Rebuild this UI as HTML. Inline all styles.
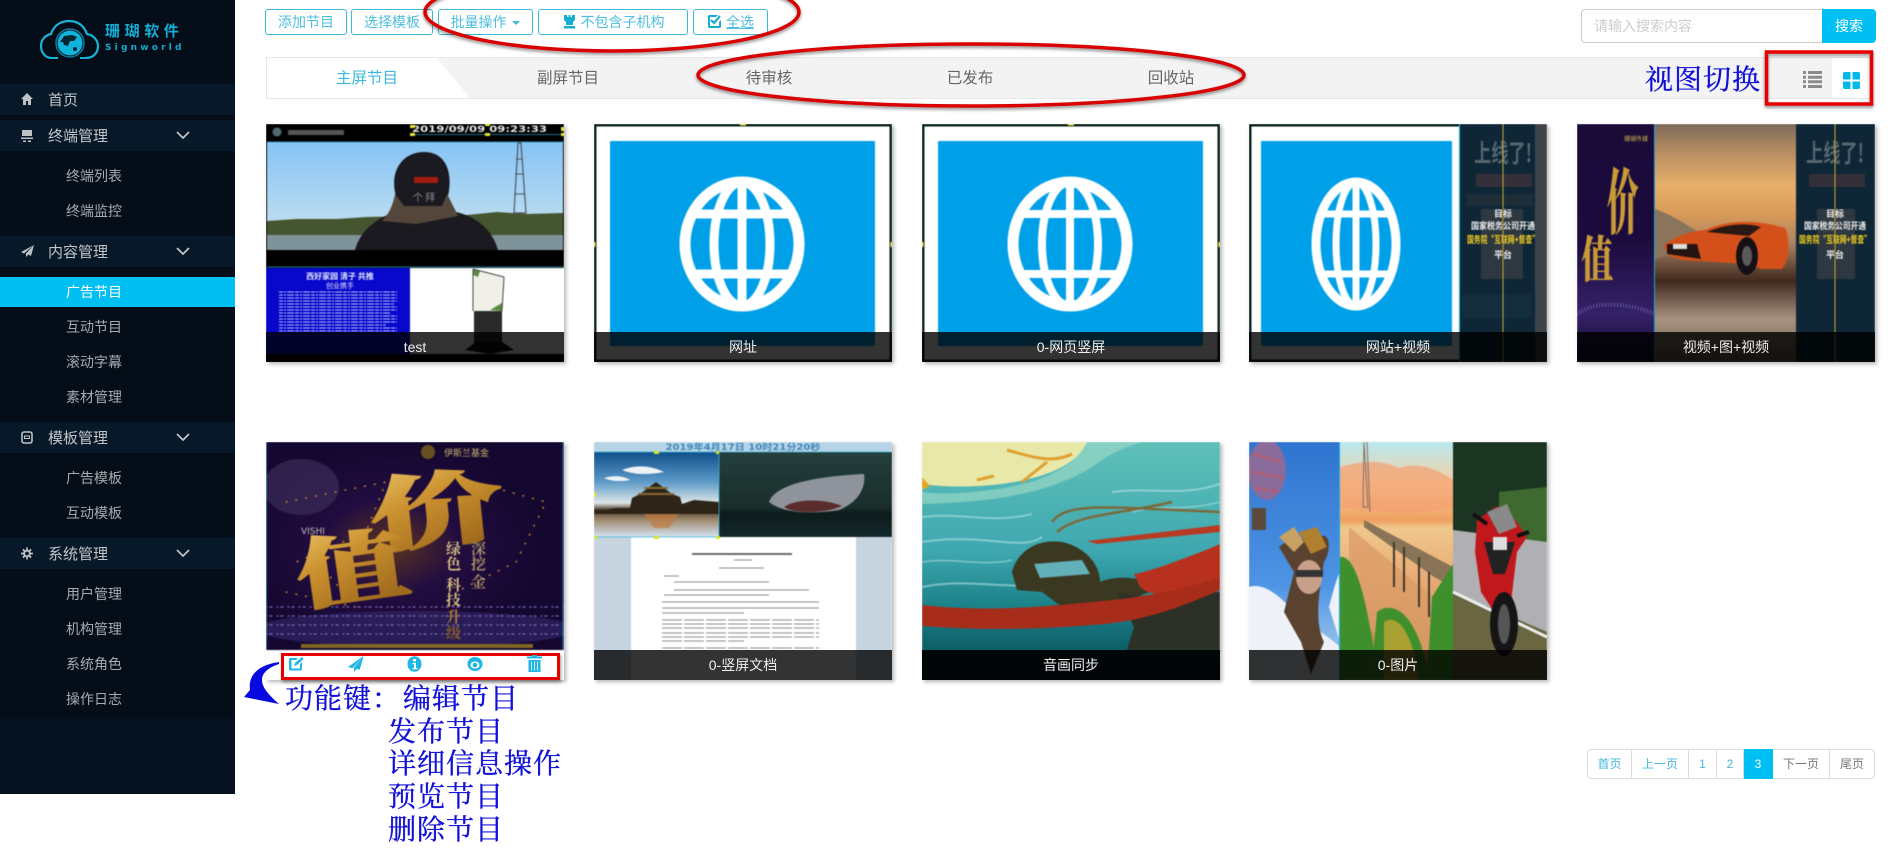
<!DOCTYPE html>
<html lang="zh"><head><meta charset="utf-8"><title>广告节目</title>
<style>
*{box-sizing:border-box;margin:0;padding:0}
html,body{width:1897px;height:844px;overflow:hidden;background:#fff;font-family:"Liberation Sans","Noto Sans CJK SC",sans-serif}
.a{position:absolute}
#side{left:0;top:0;width:235px;height:794px;background:#06121f}
.dark{left:0;width:235px;background:#040d18}
.row{left:0;width:235px;height:31px;background:#071828;color:#c2c5c8;font-size:15px;line-height:33px;padding-left:48px}
.row svg{position:absolute}
.sub{left:66px;font-size:14px;color:#a7abae;line-height:21px;height:20px}
.btn{top:9px;height:26px;border:1px solid #3db9d9;border-radius:3px;color:#4dbfe0;font-size:14px;line-height:24px;text-align:center;background:#fff}
.tab{top:69px;font-size:15.5px;line-height:20px;color:#666;text-align:center;width:120px}
.card{width:298px;height:238px;box-shadow:2px 2px 4px rgba(0,0,0,.3);overflow:hidden;background:#fff}
.card svg{display:block;position:absolute;left:0;top:0;filter:blur(.4px)}
.lab{position:absolute;left:0;bottom:0;width:298px;height:30px;background:rgba(0,0,0,.8);color:#eee;font-size:14px;line-height:30px;text-align:center}
.blue{color:#1010d8;font-family:"Noto Serif CJK SC","Liberation Serif",serif;font-size:28px;line-height:33px;white-space:nowrap;letter-spacing:1px;-webkit-text-stroke:.35px #1010d8}
.pg{top:749px;height:30px;border:1px solid #ddd;border-left:0;font-size:12px;line-height:28px;text-align:center;color:#45b8dc}
</style></head><body>

<div class="a" id="side"></div>
<div class="a dark" style="top:0;height:84px"></div>
<div class="a dark" style="top:115px;height:121px"></div>
<div class="a dark" style="top:267px;height:155px"></div>
<div class="a dark" style="top:453px;height:84px"></div>
<div class="a dark" style="top:568px;height:151px"></div>

<!-- logo -->
<svg class="a" style="left:38px;top:18px" width="62" height="44" viewBox="0 0 62 44">
<path d="M14 40C6 40 3 33 3 28 3 21 8 17 13 16 16 7 23 3 31 3c9 0 15 5 18 13 6 1 11 6 11 12 0 6-4 12-12 12" fill="none" stroke="#19b3d6" stroke-width="2.2"/>
<path d="M14 40h6M42 40h6" stroke="#19b3d6" stroke-width="2"/>
<circle cx="32" cy="25" r="14" fill="none" stroke="#127c9a" stroke-width="1.5"/>
<circle cx="32" cy="25" r="12.5" fill="#0fb4dc"/>
<path d="M22 24l4-6 8-1 5 2-3 4-4 0-2 5-4-1-1-3z" fill="#08222e"/><circle cx="37" cy="31" r="2" fill="#08222e"/>
</svg>
<div class="a" style="left:105px;top:22px;width:90px;font-size:15px;line-height:19px;font-weight:bold;color:#15aed4;letter-spacing:4.6px;white-space:nowrap">珊瑚软件</div>
<div class="a" style="left:105px;top:42px;font-size:9px;line-height:12px;color:#14a8cc;letter-spacing:3.2px;white-space:nowrap;font-family:'DejaVu Sans',sans-serif;font-weight:bold">Signworld</div>

<!-- sidebar rows -->
<div class="a row" style="top:84px">首页<svg style="left:20px;top:8px" width="14" height="14" viewBox="0 0 14 14"><path d="M7 1L1 7h2v6h3V9h2v4h3V7h2z" fill="#bfc2c5"/></svg></div>
<div class="a row" style="top:120px">终端管理<svg style="left:21px;top:9px" width="12" height="14" viewBox="0 0 12 14"><path d="M1 1h10v6H1zM0 8.5h12V10H0zM2 11.5h3V13H2zM7 11.5h3V13H7z" fill="#bfc2c5"/></svg><svg style="left:176px;top:11px" width="14" height="9" viewBox="0 0 14 9"><path d="M1 1l6 6 6-6" fill="none" stroke="#bfc2c5" stroke-width="1.8"/></svg></div>
<div class="a row" style="top:236px">内容管理<svg style="left:20px;top:8px" width="15" height="14" viewBox="0 0 15 14"><path d="M14 1L1 8l3 1.5zM14 1L6 9.5V13l2.5-2.5L11 12z" fill="#bfc2c5"/></svg><svg style="left:176px;top:11px" width="14" height="9" viewBox="0 0 14 9"><path d="M1 1l6 6 6-6" fill="none" stroke="#bfc2c5" stroke-width="1.8"/></svg></div>
<div class="a row" style="top:422px">模板管理<svg style="left:21px;top:9px" width="12" height="13" viewBox="0 0 12 13"><rect x="1" y="1" width="10" height="11" rx="2" fill="none" stroke="#bfc2c5" stroke-width="1.6"/><path d="M3.5 5h5v2.500h-5z" fill="none" stroke="#bfc2c5"/></svg><svg style="left:176px;top:11px" width="14" height="9" viewBox="0 0 14 9"><path d="M1 1l6 6 6-6" fill="none" stroke="#bfc2c5" stroke-width="1.8"/></svg></div>
<div class="a row" style="top:538px;line-height:34px">系统管理<svg style="left:21px;top:9px" width="12" height="13" viewBox="0 0 14 14"><circle cx="7" cy="7" r="3.300" fill="none" stroke="#bfc2c5" stroke-width="2.200"/><path d="M6 0h2v3H6zM6 11h2v3H6zM0 6h3v2H0zM11 6h3v2h-3zM1.500 3l1.500-1.500L5 3.500 3.500 5zM12.500 11L11 12.500 9 10.500 10.500 9zM1.500 11L3 12.500 5 10.500 3.500 9zM12.500 3L11 1.500 9 3.500 10.500 5z" fill="#bfc2c5"/></svg><svg style="left:176px;top:11px" width="14" height="9" viewBox="0 0 14 9"><path d="M1 1l6 6 6-6" fill="none" stroke="#bfc2c5" stroke-width="1.8"/></svg></div>

<div class="a" style="left:0;top:277px;width:235px;height:30px;background:#00c0f3"></div>
<div class="a sub" style="top:166px">终端列表</div>
<div class="a sub" style="top:201px">终端监控</div>
<div class="a sub" style="top:282px;color:#fff">广告节目</div>
<div class="a sub" style="top:317px">互动节目</div>
<div class="a sub" style="top:352px">滚动字幕</div>
<div class="a sub" style="top:387px">素材管理</div>
<div class="a sub" style="top:468px">广告模板</div>
<div class="a sub" style="top:503px">互动模板</div>
<div class="a sub" style="top:584px">用户管理</div>
<div class="a sub" style="top:619px">机构管理</div>
<div class="a sub" style="top:654px">系统角色</div>
<div class="a sub" style="top:689px">操作日志</div>

<!-- buttons -->
<div class="a btn" style="left:265px;width:82px">添加节目</div>
<div class="a btn" style="left:351px;width:82px">选择模板</div>
<div class="a btn" style="left:438px;width:95px">批量操作 <span style="display:inline-block;width:0;height:0;border:4px solid transparent;border-top:4px solid #3db9d9;border-bottom:0;vertical-align:2px;margin-left:2px"></span></div>
<div class="a btn" style="left:538px;width:150px"><svg width="15" height="15" viewBox="0 0 15 15" style="vertical-align:-2px;margin-right:4px"><path d="M2 1h3v2h1.500V1h2v2H10V1h3v5l-2 2v3H4V8L2 6zM2 12h11v2.500H2z" fill="#16aed4"/></svg>不包含子机构</div>
<div class="a btn" style="left:693px;width:75px"><svg width="15" height="15" viewBox="0 0 15 15" style="vertical-align:-2px;margin-right:4px"><path d="M3 1h8l-2 2H3v9h9V8l2-2v6.500A1.500 1.500 0 0 1 12.500 14h-10A1.500 1.500 0 0 1 1 12.500v-10A1.500 1.500 0 0 1 3 1z" fill="#16aed4"/><path d="M4 6l3 3 6-7" fill="none" stroke="#16aed4" stroke-width="2.200"/></svg><span style="text-decoration:underline">全选</span></div>

<!-- search -->
<div class="a" style="left:1581px;top:9px;width:242px;height:34px;border:1px solid #ccc;border-right:0;border-radius:4px 0 0 4px;color:#ccc;font-size:14px;line-height:32px;padding-left:12px;background:#fff">请输入搜索内容</div>
<div class="a" style="left:1822px;top:9px;width:54px;height:34px;background:#00c0f3;border-radius:0 4px 4px 0;color:#fff;font-size:14px;line-height:34px;text-align:center">搜索</div>

<!-- tabs -->
<div class="a" style="left:266px;top:57px;width:1606px;height:42px;background:#f3f3f3;border-top:1px solid #e6e6e6;border-bottom:1px solid #e6e6e6"></div>
<svg class="a" style="left:266px;top:58px" width="206" height="40"><path d="M0 0H171L204 40H0z" fill="#fff"/><path d="M.5 0V40" stroke="#e6e6e6"/></svg>
<div class="a tab" style="left:307px;color:#3db8dc">主屏节目</div>
<div class="a tab" style="left:508px">副屏节目</div>
<div class="a tab" style="left:709px">待审核</div>
<div class="a tab" style="left:910px">已发布</div>
<div class="a tab" style="left:1111px">回收站</div>
<div class="a" style="left:1832px;top:58px;width:40px;height:40px;background:#fff"></div>
<svg class="a" style="left:1803px;top:71px" width="19" height="17" viewBox="0 0 19 17"><path d="M0 0h3v3H0zM5 0h14v3H5zM0 4.700h3v3H0zM5 4.700h14v3H5zM0 9.300h3v3H0zM5 9.300h14v3H5zM0 14h3v3H0zM5 14h14v3H5z" fill="#8b8b8b"/></svg>
<svg class="a" style="left:1843px;top:72px" width="17" height="17" viewBox="0 0 17 17"><path d="M0 2a2 2 0 0 1 2-2h5.500v7.500H0zM9.500 0H15a2 2 0 0 1 2 2v5.500H9.500zM0 9.500h7.500V17H2a2 2 0 0 1-2-2zM9.500 9.500H17V15a2 2 0 0 1-2 2H9.500z" fill="#00b8ea"/></svg>
<div class="a blue" style="left:1645px;top:62px">视图切换</div>

<!-- CARD 1 -->
<div class="a card" style="left:266px;top:124px">
<svg width="298" height="238" viewBox="0 0 298 238">
<defs><linearGradient id="sk" x1="0" y1="0" x2="0" y2="1"><stop offset="0" stop-color="#86c4f4"/><stop offset=".75" stop-color="#bcdcf0"/></linearGradient></defs>
<rect width="298" height="238" fill="#000"/>
<rect x="1" y="18" width="296" height="108" fill="url(#sk)"/>
<path d="M1 97l30-2 40 0 30-2 100-2 30-3 30 2 36-1v22H1z" fill="#45552f"/>
<rect x="1" y="111" width="296" height="15" fill="#7f939b"/>
<path d="M252 19h3l5 70h-12z" fill="none" stroke="#4d5560" stroke-width="1.200"/><path d="M249 50h8M250 35h6M248 70h10" stroke="#4d5560"/>
<path d="M89 126C94 108 108 96 124 90L130 72C123 48 136 28 158 28 181 28 187 50 182 72L190 88C208 92 226 104 232 126Z" fill="#1a1a20"/>
<path d="M129 70C126 85 122 90 116 97L150 100 192 92 181 70 176 82 138 82Z" fill="#54463a"/>
<rect x="148" y="53" width="24" height="6" fill="#a51c10"/>
<text x="158" y="77" font-size="10" fill="#cfcfcf" text-anchor="middle" font-family="Noto Sans CJK SC,sans-serif" opacity=".6">个 拜</text>
<circle cx="11" cy="8" r="4.500" fill="#506a70"/><rect x="22" y="6" width="56" height="5" fill="#555"/>
<text x="146" y="8" font-size="9" font-weight="bold" fill="#e8e8e8" font-family="DejaVu Sans,sans-serif" textLength="135" lengthAdjust="spacingAndGlyphs">2019/09/09 09:23:33</text>
<path d="M146 10.500H298" stroke="#1c6c88"/>
<path d="M144 9h5v3h-5zM219 9h5v3h-5zM295 3h3v4h-3zM295 9h3v3h-3zM144 1h5v3h-5zM219 0h5v2h-5z" fill="#e6e632"/>
<path d="M1 18H298M1 143H298" stroke="#2aa5c4" stroke-width=".8"/>
<rect x="0" y="144" width="144" height="86" fill="#0808cc"/>
<rect x="144" y="144" width="154" height="86" fill="#fff"/>
<g stroke="#b8c4fa" stroke-width="1" stroke-dasharray="4 1 2 1 7 1">
<path d="M13 168H131M13 171H131M13 174H131M13 177H131M13 180H128M13 183H131M13 186H131M13 189H125M13 192H131M13 195H131M13 198H131M13 201H120M13 204H131M13 207H131"/></g>
<text x="74" y="155" font-size="8" font-weight="bold" fill="#e4e8ff" text-anchor="middle" font-family="Noto Sans CJK SC,sans-serif">西好家园 清子 共推</text>
<text x="74" y="164" font-size="7" fill="#e4e8ff" text-anchor="middle" font-family="Noto Sans CJK SC,sans-serif">创业携手</text>
<path d="M207 145L238 153 236 187 208 187Z" fill="#f0f0e8"/><path d="M207 145l7 2-2 6-5-2zM224 186l12-7v8z" fill="#5a8a44"/>
<path d="M207 145L238 153M207 145V187M238 153L236 187" stroke="#444" stroke-width="1"/>
<rect x="208" y="187" width="28" height="35" fill="#2a2a2a"/><path d="M199 226L210 218H236L248 226 224 230Z" fill="#111"/>
</svg><div class="lab">test</div></div>

<!-- CARD 2 -->
<div class="a card" style="left:594px;top:124px">
<svg width="298" height="238" viewBox="0 0 298 238">
<rect width="298" height="238" fill="#fff"/>
<rect x="1.200" y="1.200" width="295.600" height="235.600" fill="none" stroke="#041a14" stroke-width="2.500"/>
<rect x="16" y="17" width="265" height="205" fill="#00a0e9"/>
<g fill="none" stroke="#fff" stroke-width="11"><ellipse cx="148" cy="120" rx="57" ry="62"/><ellipse cx="148" cy="120" rx="28" ry="62" stroke-width="9"/><path d="M148 57V183" stroke-width="9"/><path d="M95 90H201M95 150H201" stroke-width="9"/></g>
<path d="M0 118v5M298 118v5" stroke="#e6e632" stroke-width="3"/><path d="M146 0h6" stroke="#e6e632" stroke-width="3"/>
</svg><div class="lab">网址</div></div>

<!-- CARD 3 -->
<div class="a card" style="left:922px;top:124px">
<svg width="298" height="238" viewBox="0 0 298 238">
<rect width="298" height="238" fill="#fff"/>
<rect x="1.200" y="1.200" width="295.600" height="235.600" fill="none" stroke="#041a14" stroke-width="2.500"/>
<rect x="16" y="17" width="265" height="205" fill="#00a0e9"/>
<g fill="none" stroke="#fff" stroke-width="11"><ellipse cx="148" cy="120" rx="57" ry="62"/><ellipse cx="148" cy="120" rx="28" ry="62" stroke-width="8"/><path d="M148 57V183" stroke-width="8"/><path d="M95 90H201M95 150H201" stroke-width="8"/></g>
<path d="M0 118v5M298 118v5" stroke="#e6e632" stroke-width="3"/><path d="M146 0h6" stroke="#e6e632" stroke-width="3"/>
</svg><div class="lab">0-网页竖屏</div></div>

<!-- CARD 4 -->
<div class="a card" style="left:1249px;top:124px">
<svg width="298" height="238" viewBox="0 0 298 238">
<rect width="298" height="238" fill="#fff"/>
<path d="M0 1.200H210M1.200 0V238M0 236.800H210" stroke="#041a14" stroke-width="2.500"/>
<rect x="12" y="17" width="191" height="205" fill="#00a0e9"/>
<g fill="none" stroke="#fff" stroke-width="9"><ellipse cx="107" cy="120" rx="40" ry="62"/><ellipse cx="107" cy="120" rx="20" ry="62" stroke-width="7"/><path d="M107 57V183" stroke-width="7"/><path d="M70 90H144M70 150H144" stroke-width="7"/></g>
<rect x="210" y="0" width="88" height="238" fill="#0e2635"/>
<rect x="232" y="85" width="42" height="70" fill="#2e3840"/>
<rect x="286" y="0" width="12" height="238" fill="#3e4448"/>
<rect x="218" y="70" width="66" height="12" fill="#1e2e38"/>
<text x="254" y="38" font-size="25" fill="#55666f" text-anchor="middle" font-family="Noto Sans CJK SC,sans-serif" font-weight="bold" textLength="58" lengthAdjust="spacingAndGlyphs">上线了!</text>
<rect x="227" y="50" width="56" height="13" fill="#33303a"/>
<g font-family="Noto Sans CJK SC,sans-serif" text-anchor="middle" font-weight="bold">
<text x="254" y="93" font-size="9" fill="#f0f0f0">目标</text>
<text x="254" y="105" font-size="9" fill="#f0f0f0" textLength="64" lengthAdjust="spacingAndGlyphs">国家税务公司开通</text>
<text x="254" y="119" font-size="9.500" fill="#f5d020" textLength="72" lengthAdjust="spacingAndGlyphs">国务院“互联网+督查”</text>
<text x="254" y="134" font-size="9" fill="#f0f0f0">平台</text></g>
<rect x="213" y="170" width="70" height="24" fill="#153040" opacity=".7"/>
<path d="M210.500 0V238" stroke="#17b6e0"/><path d="M254 0V238" stroke="#c8a83a"/>
</svg><div class="lab">网站+视频</div></div>

<!-- CARD 5 -->
<div class="a card" style="left:1577px;top:124px">
<svg width="298" height="238" viewBox="0 0 298 238">
<defs><linearGradient id="sun" x1="0" y1="0" x2="0" y2="1"><stop offset="0" stop-color="#7c6a5c"/><stop offset=".12" stop-color="#b98f62"/><stop offset=".26" stop-color="#e6b06a"/><stop offset=".38" stop-color="#d89a58"/><stop offset=".5" stop-color="#a98465"/><stop offset=".66" stop-color="#40291e"/><stop offset=".82" stop-color="#a89382"/><stop offset="1" stop-color="#6a5a48"/></linearGradient>
<linearGradient id="pur" x1="0" y1="0" x2="0" y2="1"><stop offset="0" stop-color="#1b0b38"/><stop offset=".5" stop-color="#1c0c3e"/><stop offset=".8" stop-color="#342269"/><stop offset="1" stop-color="#120a2a"/></linearGradient></defs>
<rect width="298" height="238" fill="url(#sun)"/>
<rect width="78" height="238" fill="url(#pur)"/>
<rect x="219" width="79" height="238" fill="#0e2635"/>
<path d="M78 85C105 95 118 108 140 118L78 135Z" fill="#8a745c"/>
<path d="M86 122C98 112 110 108 128 106 150 96 178 95 208 104 214 115 212 137 205 145H185L170 140 105 136 92 132Z" fill="#d4501a"/>
<path d="M90 120H120L124 135 90 130Z" fill="#241414"/><path d="M130 108C150 99 172 99 184 103L172 112Z" fill="#2a1814"/>
<ellipse cx="170" cy="132" rx="11" ry="19" fill="#141014"/><ellipse cx="170" cy="132" rx="5" ry="10" fill="#5a5a5a"/>
<rect x="96" y="120" width="14" height="5" fill="#ddd"/>
<g font-family="Noto Serif CJK SC,serif" font-weight="900" fill="#c89a38"><text transform="translate(30 104) scale(.75 1.700)" font-size="42">价</text><text transform="translate(4 153) scale(.85 1.300)" font-size="38">值</text></g>
<text x="47" y="17" font-size="6" fill="#d4b848" font-family="Noto Sans CJK SC,sans-serif">珊瑚传媒</text>
<path d="M0 190C20 175 55 180 78 190" stroke="#6a58a8" stroke-width="4" fill="none" stroke-dasharray="1 2"/>
<path d="M77.500 0V238" stroke="#1aa8d4"/>
<rect x="240" y="85" width="38" height="70" fill="#2e3840"/>
<text x="258" y="38" font-size="25" fill="#55666f" text-anchor="middle" font-family="Noto Sans CJK SC,sans-serif" font-weight="bold" textLength="58" lengthAdjust="spacingAndGlyphs">上线了!</text>
<rect x="232" y="50" width="56" height="13" fill="#33303a"/>
<g font-family="Noto Sans CJK SC,sans-serif" text-anchor="middle" font-weight="bold">
<text x="258" y="93" font-size="9" fill="#f0f0f0">目标</text>
<text x="258" y="105" font-size="9" fill="#f0f0f0" textLength="62" lengthAdjust="spacingAndGlyphs">国家税务公司开通</text>
<text x="258" y="119" font-size="9.500" fill="#f5d020" textLength="72" lengthAdjust="spacingAndGlyphs">国务院“互联网+督查”</text>
<text x="258" y="134" font-size="9" fill="#f0f0f0">平台</text></g>
<path d="M258 0V238" stroke="#c8a83a"/>
</svg><div class="lab">视频+图+视频</div></div>

<!-- CARD 6 with action bar -->
<div class="a card" style="left:266px;top:442px">
<svg width="298" height="238" viewBox="0 0 298 238">
<defs><radialGradient id="gl" cx=".42" cy=".5" r=".5"><stop offset="0" stop-color="#5c3420"/><stop offset=".45" stop-color="#220d40"/><stop offset="1" stop-color="#150830"/></radialGradient>
<linearGradient id="gold" x1="0" y1="0" x2=".4" y2="1"><stop offset="0" stop-color="#f4d478"/><stop offset=".5" stop-color="#cc9230"/><stop offset="1" stop-color="#a06a1c"/></linearGradient></defs>
<rect width="298" height="208" fill="url(#gl)"/>
<ellipse cx="35" cy="45" rx="38" ry="28" fill="#3a2c58" opacity=".7"/>
<ellipse cx="150" cy="187" rx="160" ry="18" fill="#2e2260" opacity=".8"/>
<g fill="none" stroke-linecap="round">
<path d="M20 60L120 40 100 90 30 120M170 30L280 60 250 120 190 150M20 150L90 165 60 130" stroke="#d88830" stroke-width="1.300" stroke-dasharray="1 9"/>
<path d="M0 165H298M0 174H298M0 183H298M0 192H298" stroke="#7a6cb8" stroke-width="1.200" stroke-dasharray="1 3 2 5"/>
</g>
<g font-family="Noto Serif CJK SC,serif" font-weight="900" fill="url(#gold)" stroke="url(#gold)" stroke-width="2.500">
<text transform="translate(108 104) rotate(-6) scale(1.350 .820)" font-size="98">价</text>
<text transform="translate(34 162) rotate(-8) scale(1.150 .780)" font-size="98">值</text></g>
<g font-family="Noto Serif CJK SC,serif" font-weight="700" fill="#d8c080" font-size="15">
<text x="180" y="112">绿</text><text x="180" y="127">色</text><text x="180" y="148">科</text><text x="180" y="163">技</text>
<text x="205" y="112" fill="#a8906a">深</text><text x="205" y="127" fill="#a8906a">挖</text><text x="205" y="145" fill="#a8906a">金</text>
<text x="180" y="180" fill="#b08030">升</text><text x="180" y="196" fill="#8a6028">级</text></g>
<text x="178" y="14" font-size="9" fill="#c8b070" font-family="Noto Sans CJK SC,sans-serif">伊斯兰基金</text>
<circle cx="162" cy="10" r="7" fill="#6a5020"/>
<text x="35" y="92" font-size="9" fill="#bbb" font-family="DejaVu Sans,sans-serif">VISHI</text>
<rect x="35" y="202" width="232" height="4" fill="#9a8020" opacity=".8"/>
<path d="M0 0V208" stroke="#1a7fa8" stroke-width="1.500"/><path d="M297 0V208" stroke="#1a7fa8"/>
<rect y="208" width="298" height="30" fill="#fff"/>
</svg></div>
<div class="a" style="left:281px;top:653px;width:279px;height:27px;border:3px solid #e60000;box-shadow:1px 2px 3px rgba(0,0,0,.4)"></div>
<svg class="a" style="left:288px;top:656px" width="16" height="16" viewBox="0 0 16 16"><path d="M3 2h7L8 4H3.500v8.500H12V8l2-2v7a1.500 1.500 0 0 1-1.500 1.500h-10A1.500 1.500 0 0 1 1 13V3.500A1.500 1.500 0 0 1 3 2z" fill="#1fb6e6"/><path d="M6 10l1-3 7-6 1.500 2-6.500 6z" fill="#1fb6e6"/></svg>
<svg class="a" style="left:348px;top:656px" width="16" height="16" viewBox="0 0 16 16"><path d="M15.500 0L0 11l4.500 1.200zM15.500 0L6 11.500V16l2.800-3.300 3 1z" fill="#1fb6e6"/></svg>
<svg class="a" style="left:407px;top:656px" width="15" height="16" viewBox="0 0 15 16"><ellipse cx="7.500" cy="8" rx="7" ry="7.800" fill="#1fb6e6"/><rect x="6" y="3" width="3" height="2.500" fill="#fff"/><path d="M5.500 7h3.500v5h1.500v1.300h-5V12H7V8.300H5.500z" fill="#fff"/></svg>
<svg class="a" style="left:467px;top:656px" width="16" height="16" viewBox="0 0 16 16"><ellipse cx="8" cy="8" rx="7.500" ry="7" fill="#1fb6e6"/><ellipse cx="8" cy="9" rx="4.500" ry="3.500" fill="#fff"/><circle cx="8" cy="9" r="2.300" fill="#1fb6e6"/></svg>
<svg class="a" style="left:527px;top:655px" width="15" height="17" viewBox="0 0 15 17"><path d="M5 0h5v1.500h5V3.500H0V1.500h5zM1.500 5h12v12h-12z" fill="#1fb6e6"/><path d="M4.500 6.500V15.500M7.500 6.500V15.500M10.500 6.500V15.500" stroke="#fff" stroke-width=".8"/></svg>

<!-- CARD 7 -->
<div class="a card" style="left:594px;top:442px">
<svg width="298" height="238" viewBox="0 0 298 238">
<defs><linearGradient id="s7" x1="0" y1="0" x2="0" y2="1"><stop offset="0" stop-color="#0f4f8c"/><stop offset=".35" stop-color="#5d9ac8"/><stop offset=".6" stop-color="#dfe6e6"/><stop offset=".68" stop-color="#4a3a2a"/><stop offset=".8" stop-color="#a08a70"/><stop offset="1" stop-color="#d4e4f2"/></linearGradient>
<linearGradient id="t7" x1="0" y1="0" x2="0" y2="1"><stop offset="0" stop-color="#243f3c"/><stop offset=".65" stop-color="#1a2e2c"/><stop offset=".72" stop-color="#0d1c1c"/><stop offset="1" stop-color="#14282a"/></linearGradient></defs>
<rect width="298" height="238" fill="#c6d4df"/>
<rect width="298" height="10" fill="#b7d4e6"/>
<text x="149" y="8" font-size="8.500" font-weight="bold" fill="#3c86b8" text-anchor="middle" font-family="DejaVu Sans,Noto Sans CJK SC,sans-serif" textLength="155" lengthAdjust="spacingAndGlyphs">2019年4月17日 10时21分20秒</text>
<rect y="10" width="125" height="85" fill="url(#s7)"/>
<path d="M28 28C42 22 58 24 70 30 55 33 40 33 28 28zM10 36C20 33 30 34 36 38 26 40 16 39 10 36z" fill="#eef2f4"/>
<path d="M0 68H125V72H0zM22 66H36L38 56 46 52 54 46 62 40 70 46 78 52 86 55 88 62 100 58 125 60V70H0Z" fill="#2e2418"/>
<path d="M44 52H80M50 46H74" stroke="#8a6a30" stroke-width="2"/>
<path d="M50 72H85L75 86H60Z" fill="#c07a40" opacity=".7"/>
<rect x="125" y="10" width="173" height="85" fill="url(#t7)"/>
<path d="M175 60C180 45 210 35 270 32 272 45 265 60 245 68 220 72 190 72 175 60Z" fill="#8f949c"/><path d="M190 65C205 55 235 58 248 64 230 72 200 72 190 65Z" fill="#5a2c2c"/>
<rect x="37" y="95" width="225" height="143" fill="#fff"/>
<g stroke="#8a8d90" stroke-width="1"><path d="M98 112H198" stroke-width="1.800" stroke="#55585c"/><path d="M140 118H158M125 126H170M70 134H85M80 140H175M80 148H215M70 153H175M68 160H225M68 166H225M68 171H150" /><path d="M68 178H225M68 182H225M68 186H225M68 191H225M68 195H225M68 199H150M68 206H225" stroke-dasharray="20 2"/></g>
<path d="M0 10H298M0 95H125" stroke="#3ab0d4" stroke-width=".8"/><path d="M125 10V95" stroke="#3ab0d4" stroke-width=".8"/><path d="M60 9h5v3h-5zM60 94h5v3h-5zM0 94h3v3H0zM122 94h4v3h-4zM122 9h3v3h-3zM0 50h2v5H0z" fill="#d6e620"/>
</svg><div class="lab">0-竖屏文档</div></div>

<!-- CARD 8 -->
<div class="a card" style="left:922px;top:442px">
<svg width="298" height="238" viewBox="0 0 298 238">
<defs><linearGradient id="sea" x1="0" y1="0" x2="0" y2="1"><stop offset="0" stop-color="#5fc0b8"/><stop offset=".45" stop-color="#3fa8b0"/><stop offset=".7" stop-color="#1a8088"/><stop offset="1" stop-color="#04464e"/></linearGradient></defs>
<rect width="298" height="238" fill="url(#sea)"/>
<path d="M0 0H165C155 24 120 38 70 43 35 46 15 44 0 42Z" fill="#e8e8a8"/>
<path d="M165 0C150 30 110 45 50 50 30 52 15 52 0 50V62C60 60 130 55 180 18 195 8 208 4 220 0Z" fill="#a4dcc8" opacity=".6"/>
<path d="M85 8C110 15 130 22 150 12M100 40L125 20M55 38L72 34" stroke="#e0a030" stroke-width="3" fill="none"/>
<path d="M0 35L8 44 0 48z" fill="#e6a820"/>
<g stroke="#b8e8e8" fill="none" opacity=".55"><path d="M0 75C40 70 70 82 110 72" stroke-width="2"/><path d="M0 100C60 90 100 110 120 95" stroke-width="2"/><path d="M0 120C30 115 60 125 90 118" stroke-width="1.500"/><path d="M0 145C50 135 90 150 130 140" stroke-width="2"/><path d="M190 50C230 45 260 55 298 42" stroke-width="2"/><path d="M210 70C240 62 260 70 298 60" stroke-width="1.500"/></g>
<path d="M130 80C145 60 180 65 298 70M135 90C155 72 200 72 250 60" stroke="#7a6a3c" stroke-width="2.500" fill="none"/>
<path d="M165 99L298 83V90L175 102Z" fill="#b83a22"/>
<path d="M90 130C95 110 115 96 140 100 160 104 178 120 178 140 195 132 225 136 240 145L215 155 170 168 140 165 120 150 95 148Z" fill="#3a3820"/>
<path d="M112 122L160 118 168 132 118 136Z" fill="#62b0b8"/>
<path d="M195 150C230 160 270 150 298 150V208H205L212 185Z" fill="#2c3026"/>
<path d="M212 132C228 130 275 112 298 102V140L270 152C245 156 225 152 218 145Z" fill="#b8311e"/>
<path d="M0 163C60 170 120 165 170 160 230 155 270 145 298 135V148C260 165 220 180 170 183 110 188 50 188 0 184Z" fill="#a82c1a"/>
</svg><div class="lab" style="background:rgba(0,0,0,.92)">音画同步</div></div>

<!-- CARD 9 -->
<div class="a card" style="left:1249px;top:442px">
<svg width="298" height="238" viewBox="0 0 298 238">
<defs><linearGradient id="b9" x1="0" y1="0" x2="0" y2="1"><stop offset="0" stop-color="#2f75d0"/><stop offset=".6" stop-color="#4d94e4"/><stop offset="1" stop-color="#bcd8f0"/></linearGradient>
<linearGradient id="p9" x1="0" y1="0" x2="0" y2="1"><stop offset="0" stop-color="#b8e8f0"/><stop offset=".18" stop-color="#f8d0a0"/><stop offset=".33" stop-color="#f0a060"/><stop offset=".36" stop-color="#f0c88c"/><stop offset=".6" stop-color="#e8a874"/><stop offset="1" stop-color="#a07c30"/></linearGradient></defs>
<rect width="91" height="238" fill="url(#b9)"/>
<ellipse cx="18" cy="28" rx="19" ry="30" fill="#8a6c9c"/><path d="M4 12L32 20M2 30L36 36M6 46L30 50" stroke="#c05868" stroke-width="3" stroke-dasharray="3 2"/><rect x="3" y="66" width="14" height="22" fill="#5a4a3c"/>
<path d="M0 145C15 140 32 155 45 170 60 185 75 190 91 205V238H0ZM80 165C84 150 88 135 91 130V200Z" fill="#eef2f8"/>
<path d="M30 105C45 92 60 100 70 95 82 88 82 110 75 120 70 150 65 180 75 200L62 232 52 200 35 170 45 130Z" fill="#5a4230"/>
<ellipse cx="60" cy="135" rx="13" ry="17" fill="#c8a08a"/><path d="M47 128h27v7H47z" fill="#333"/>
<path d="M30 95L45 85 55 100 45 110Z" fill="#c8a060"/><path d="M50 90L68 85 78 105 62 112Z" fill="#b08030"/>
<rect x="91" width="113" height="238" fill="url(#p9)"/>
<path d="M91 25C110 20 130 16 150 26 175 18 195 32 204 38V65C170 75 130 70 91 65Z" fill="#f4a070" opacity=".7"/>
<path d="M115 0l4 65h-5zM118 0l3 70" stroke="#807060" fill="none"/>
<path d="M115 78L204 125V145L185 135 115 85Z" fill="#8a7458"/>
<path d="M100 85L190 160 185 220 130 200 100 150Z" fill="#dc9c68" opacity=".8"/>
<path d="M91 115C108 112 118 165 125 208L120 238H91ZM128 170C148 155 172 180 180 238H122ZM183 155L204 122V238H178Z" fill="#3f8f2c"/>
<path d="M135 180C150 170 165 195 170 238H135Z" fill="#a8a030"/>
<path d="M145 100V145M155 105V150M170 115V165M180 130V175" stroke="#40382c" stroke-width="2"/>
<rect x="204" width="94" height="238" fill="#1c3522"/>
<path d="M250 50L298 45V115L250 90Z" fill="#3e6a30"/>
<path d="M204 88L298 100V190L204 150Z" fill="#b0b0b4"/>
<path d="M204 150V238H298V190Z" fill="#6a6640"/>
<path d="M204 150L298 195" stroke="#eee" stroke-width="3"/>
<path d="M228 78L248 64 268 80 278 95 268 110 262 160 245 170 232 150 226 110Z" fill="#c0181c"/>
<path d="M238 70L258 62 268 85 250 92Z" fill="#8a8a8a"/><path d="M235 100H266L256 132 244 132Z" fill="#222"/><path d="M244 95H258V108H244z" fill="#ddd"/>
<path d="M224 72L238 82M280 90L268 94" stroke="#111" stroke-width="4"/>
<ellipse cx="255" cy="182" rx="14" ry="32" fill="#151515"/><ellipse cx="255" cy="182" rx="6" ry="20" fill="#555"/>
<path d="M90.500 0V238" stroke="#12b0e4"/>
</svg><div class="lab">0-图片</div></div>

<!-- pagination -->
<div class="a pg" style="left:1587px;width:45px;border-left:1px solid #ddd;border-radius:4px 0 0 4px">首页</div>
<div class="a pg" style="left:1632px;width:57px">上一页</div>
<div class="a pg" style="left:1689px;width:28px">1</div>
<div class="a pg" style="left:1717px;width:27px">2</div>
<div class="a pg" style="left:1744px;width:29px;background:#00c0f3;border-color:#00c0f3;color:#fff">3</div>
<div class="a pg" style="left:1773px;width:57px;color:#777">下一页</div>
<div class="a pg" style="left:1830px;width:45px;color:#777;border-radius:0 4px 4px 0">尾页</div>

<!-- annotations -->
<svg class="a" style="left:0;top:0;pointer-events:none" width="1897" height="844" viewBox="0 0 1897 844">
<defs><filter id="shd" x="-5%" y="-20%" width="110%" height="150%"><feDropShadow dx="0" dy="2" stdDeviation="1.500" flood-color="#000" flood-opacity=".45"/></filter></defs>
<g fill="none" stroke="#d80000" stroke-width="3.500" filter="url(#shd)">
<ellipse cx="612" cy="12" rx="187" ry="39"/>
<ellipse cx="971" cy="75" rx="273" ry="31"/>
<rect x="1766.500" y="52" width="105" height="52" stroke="#e60000" stroke-width="3.500"/>
</g>
<path d="M279 662C258 665 248 675 250 690L244 697 279 704C270 696 262 688 262 680 262 672 270 667 279 664Z" fill="#0808e0"/>
</svg>
<div class="a blue" style="left:285px;top:681px">功能键：<span style="margin-left:2px">编辑节目</span></div>
<div class="a blue" style="left:388px;top:714px">发布节目</div>
<div class="a blue" style="left:388px;top:746px">详细信息操作</div>
<div class="a blue" style="left:388px;top:779px">预览节目</div>
<div class="a blue" style="left:388px;top:812px">删除节目</div>
</body></html>
